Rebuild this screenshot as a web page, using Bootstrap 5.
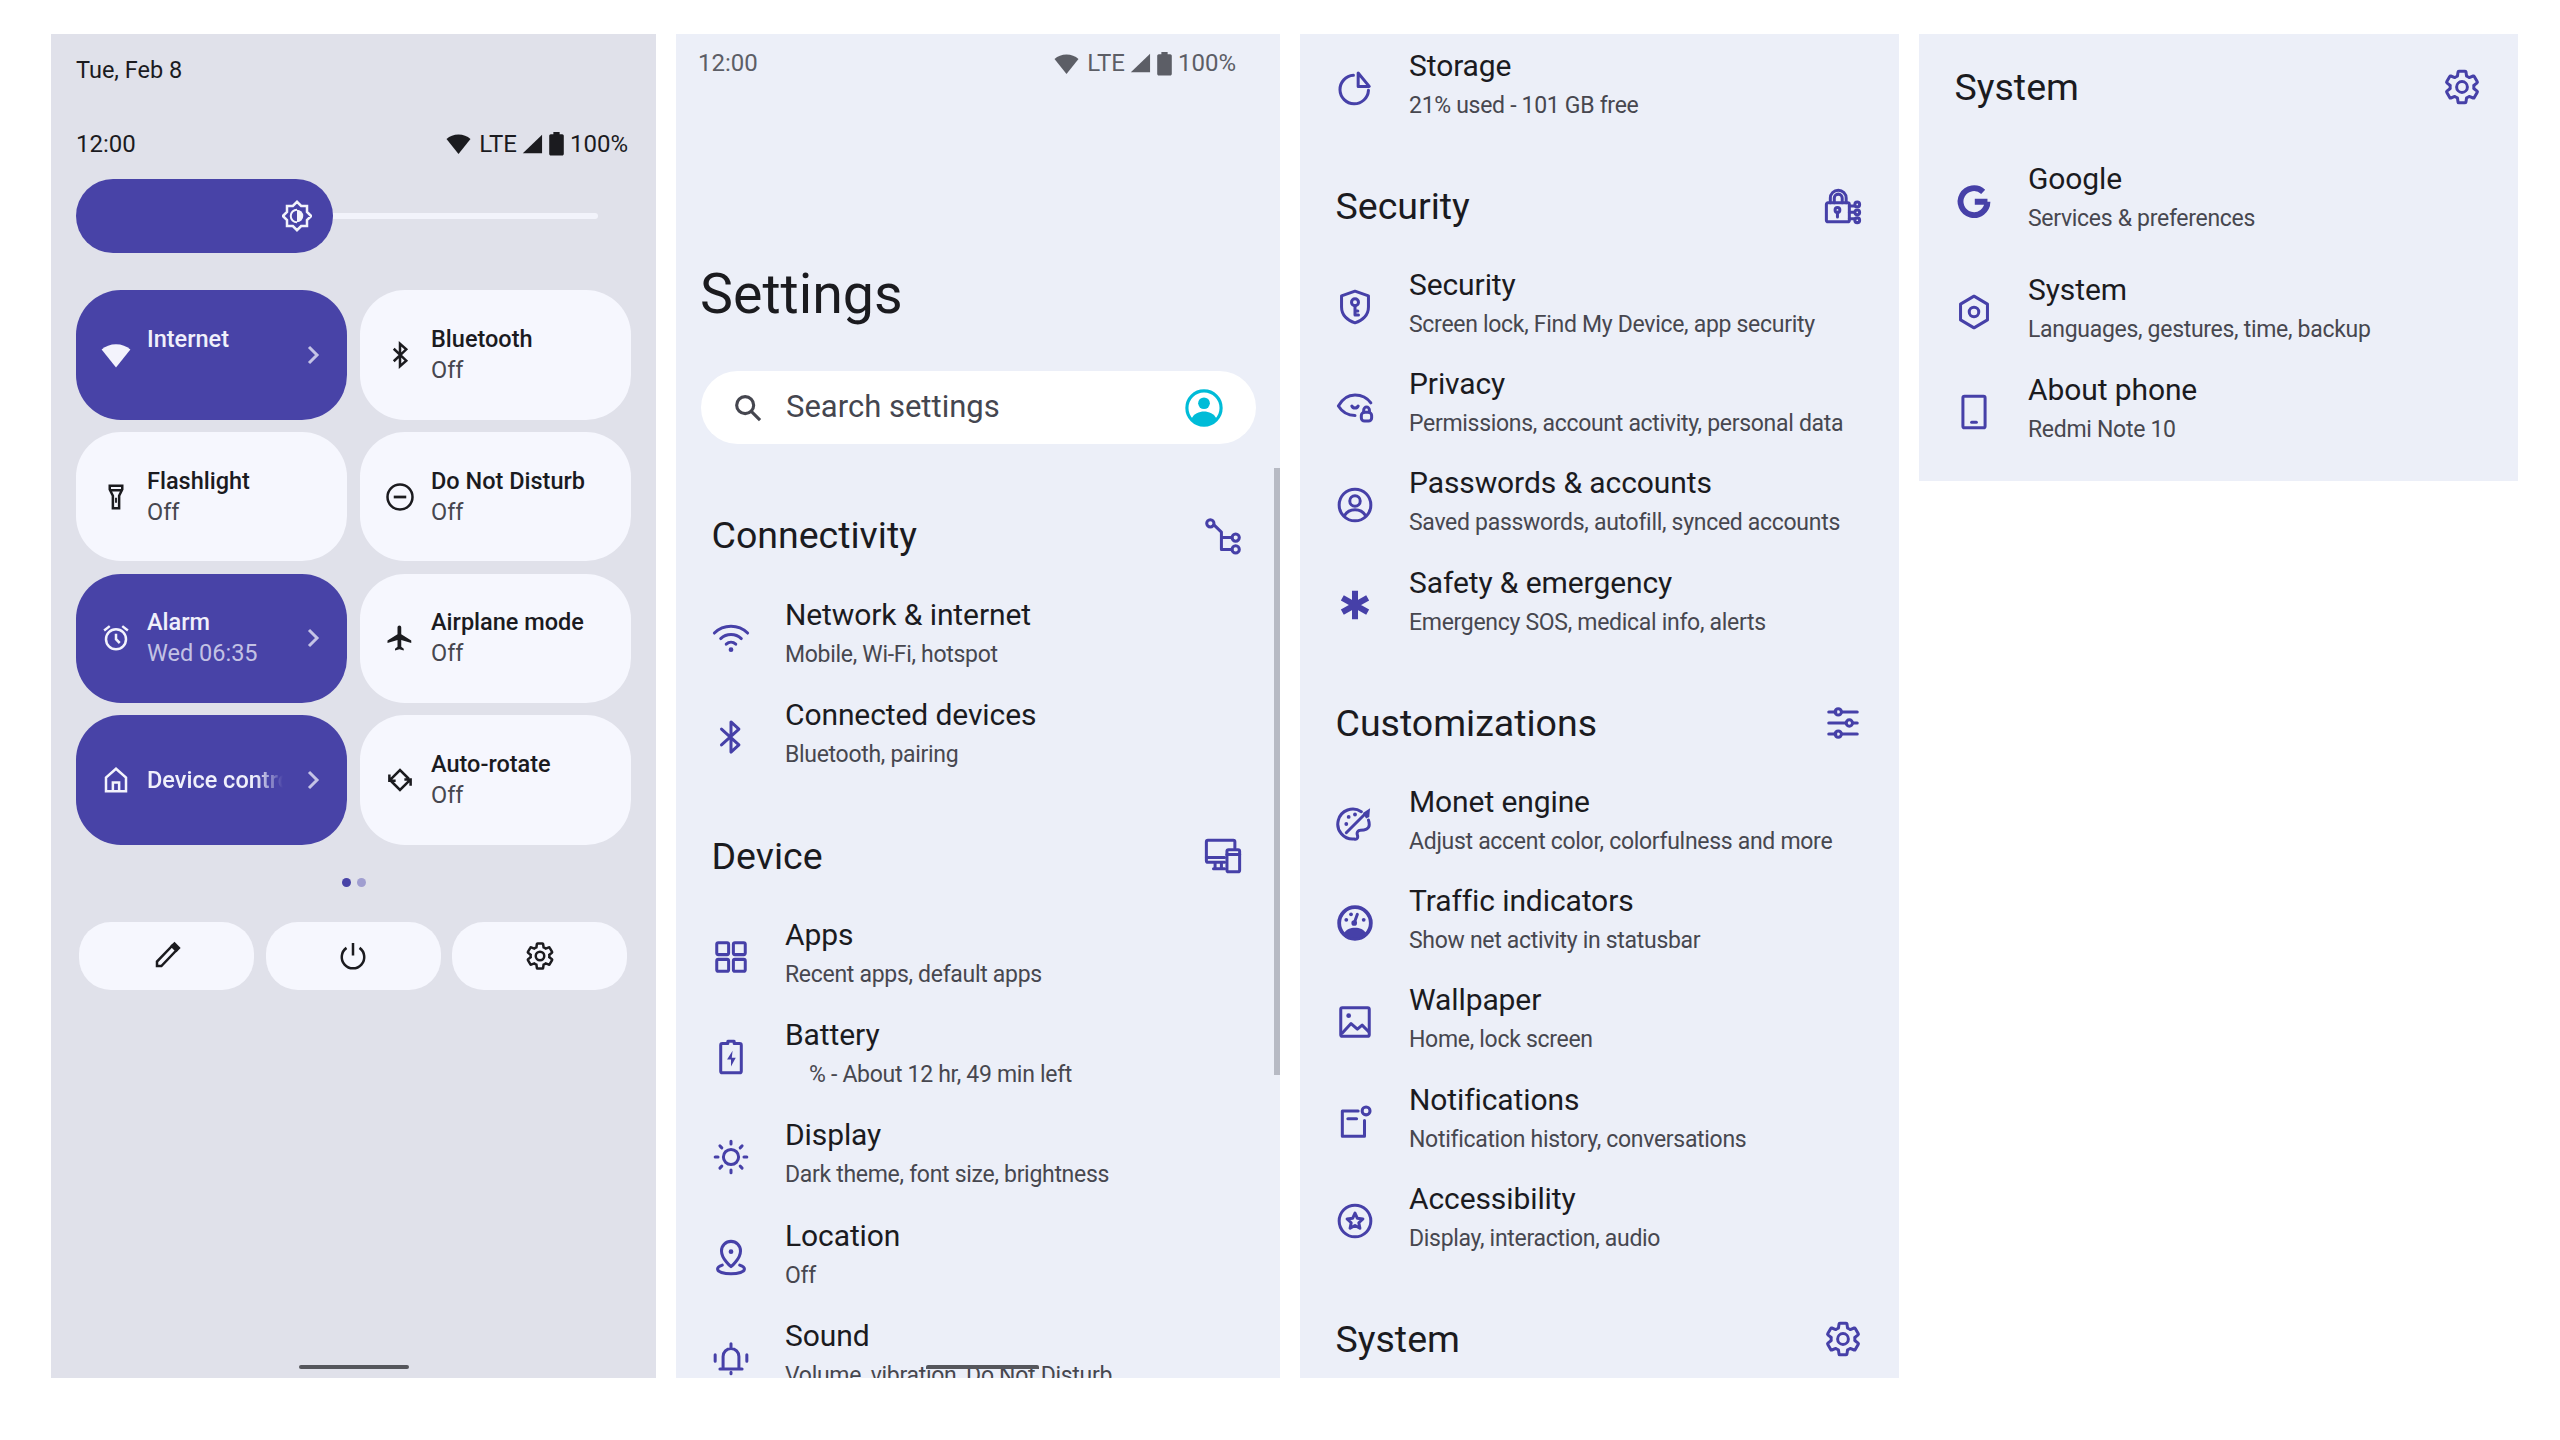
<!doctype html>
<html lang="en">
<head>
<meta charset="utf-8">
<title>Android settings</title>
<link href="https://cdn.jsdelivr.net/npm/bootstrap@5.3.0/dist/css/bootstrap.min.css" rel="stylesheet">
<style>
:root{--pri:#4843a7;--ink:#1b1b1f;--mut:#47474f;--line:#4640a8}
html,body{background:#fff;height:100%}
body{font-family:Roboto,"Liberation Sans",sans-serif;color:var(--ink);overflow:hidden}
.stage{padding:34px 0 0 51px;gap:20px;height:1378px}
.pane{height:1344px;overflow:hidden;flex:none;background:#eceff8}
.pane-qs{width:605px;background:#e0e1ea;padding:0 24px 0 25px}
.pane-a{width:604px;position:relative}
.pane-b{width:599px;padding:2px 37px 0 35.5px}
.pane-c{width:599px;height:447px;padding:24.5px 37px 0 35.5px}
.pane-a .body-a{padding:0 38px 0 35.5px}
.qdate{height:74px;font-size:23.5px}
.qstat{height:71px;font-size:24px}
.stat-ic{width:25px;height:25px;fill:currentColor;flex:none}
.stat-sig{width:22px;height:22px}
.stat-bat{margin:0 -3px 0 -3px}
.slider{height:74px;width:522px}
.thumb{width:257px;height:74px;border-radius:37px;background:var(--pri);padding-right:21px;color:#f2f3fb;flex:none}
.track{width:265px;height:6px;background:#f2f3fb;border-radius:0 3px 3px 0}
.tiles{grid-template-columns:271px 271px;column-gap:13px;row-gap:12.3px;margin-top:37px}
.tile{height:129.5px;border-radius:45px;background:#f6f7fe;padding-left:25px;padding-right:24px;color:var(--ink)}
.tile-on{background:var(--pri);color:#f3f3fc}
.tile-ic{width:30px;height:30px;margin-right:16px;flex:none;fill:none;stroke:currentColor;stroke-width:2}
.t1{font-size:23.5px;line-height:31px;font-weight:500}
.t2{font-size:23.5px;line-height:31px;color:var(--mut)}
.tile-on .t2{color:#c3c2e4}
.tile-on .t1{color:#f0f0fb}
.chev{width:20px;height:24px;fill:none;stroke:#c5c4e6;stroke-width:3;flex:none}
.fadeout{width:136px;flex:none;white-space:nowrap;overflow:hidden;-webkit-mask-image:linear-gradient(90deg,#000 80%,transparent);mask-image:linear-gradient(90deg,#000 80%,transparent)}
.dots{margin-top:33px;gap:6px;height:9px}
.dot{width:9px;height:9px;border-radius:50%;background:var(--pri)}
.dot-off{background:#a09ed0}
.acts{margin:35.5px 0 0 3px;gap:11.5px}
.act{width:175px;height:68px;border-radius:32px;background:#f6f7fe;color:var(--ink)}
.act svg{width:30px;height:30px;fill:none;stroke:currentColor;stroke-width:2}
.pill{width:110px;height:4px;background:#55565c;border-radius:2px;margin:auto auto 9px}
.astat{height:58px;padding:0 44px 0 22px;color:#5c5e66;font-size:24px}
.big{font-size:55.5px;line-height:70px;margin-top:168px;margin-left:24px;font-weight:400;color:var(--ink);height:70px}
.search{margin:41px 24px 0 24.5px;height:73px;border-radius:37px;background:#fff;padding:0 33px 0 30px;font-size:31px;color:#45464f}
.search svg.sm{width:34px;height:34px;margin-right:21.5px}
.sec{margin-top:43px}
.pane-b .sec{margin-top:42.3px}
.first{margin-top:63px}
.shead{height:60px;margin-bottom:17.5px;font-size:37.5px;line-height:57px;padding-bottom:3px}
.shead svg,.srow svg{fill:none;stroke:var(--line);stroke-width:1.9;stroke-linecap:round;stroke-linejoin:round;flex:none}
.shead svg{width:38px;height:38px}
.srow{height:99.6px}
.pane-a .srow{height:100.1px}
.pane-b .srow{height:99.3px}
.srow svg{width:38px;height:38px;margin-right:35.5px;margin-top:4px}
.ttl{font-size:30px;line-height:38px;white-space:nowrap;letter-spacing:-.1px}
.sub{font-size:23px;line-height:38px;padding-top:2px;color:var(--mut);white-space:nowrap;letter-spacing:-.3px}
.solid{fill:var(--line);stroke:none}
.mb-g{margin-bottom:11.5px}
.mt-g{margin-bottom:31px}
.scroll{position:absolute;right:0;top:434px;width:6px;height:607px;background:#b7bac4}
.gest{position:absolute;left:250px;top:1331px;width:113px;height:4px;background:#55565c;border-radius:2px 2px 0 0}
</style>
</head>
<body>
<svg class="d-none">
<symbol id="i-gear" viewBox="0 0 24 24"><path d="M19.43 12.98c.04-.32.07-.64.07-.98s-.03-.66-.07-.98l2.11-1.65c.19-.15.24-.42.12-.64l-2-3.46c-.12-.22-.39-.3-.61-.22l-2.49 1c-.52-.4-1.08-.73-1.69-.98l-.38-2.65C14.46 2.18 14.25 2 14 2h-4c-.25 0-.46.18-.49.42l-.38 2.65c-.61.25-1.17.59-1.69.98l-2.49-1c-.23-.09-.49 0-.61.22l-2 3.46c-.13.22-.07.49.12.64l2.11 1.65c-.04.32-.07.65-.07.98s.03.66.07.98l-2.11 1.65c-.19.15-.24.42-.12.64l2 3.46c.12.22.39.3.61.22l2.49-1c.52.4 1.08.73 1.69.98l.38 2.65c.03.24.24.42.49.42h4c.25 0 .46-.18.49-.42l.38-2.65c.61-.25 1.17-.59 1.69-.98l2.49 1c.23.09.49 0 .61-.22l2-3.46c.12-.22.07-.49-.12-.64l-2.11-1.65z"/><circle cx="12" cy="12" r="3.4"/></symbol>
<symbol id="i-wedge" viewBox="0 0 24 24"><path d="M12 22 .5 7.6C3.5 5 7.5 3.4 12 3.4S20.5 5 23.5 7.6z"/></symbol>
<symbol id="i-sig" viewBox="0 0 24 24"><path d="M23 2v20H2z"/></symbol>
<symbol id="i-bat" viewBox="0 0 24 24"><path d="M9 1h6v2h2.500c.8 0 1.500.7 1.500 1.500V22c0 .8-.7 1.500-1.500 1.500h-11C5.700 23.500 5 22.800 5 22V4.500C5 3.700 5.700 3 6.500 3H9z"/></symbol>
</svg>

<div class="stage d-flex">

<!-- quick settings -->
<section class="pane pane-qs d-flex flex-column">
  <div class="qdate d-flex align-items-center">Tue, Feb 8</div>
  <div class="qstat d-flex align-items-center justify-content-between pe-1">
    <span>12:00</span>
    <span class="d-flex align-items-center gap-1">
      <svg class="stat-ic"><use href="#i-wedge"/></svg><span class="ms-1">LTE</span>
      <svg class="stat-ic stat-sig"><use href="#i-sig"/></svg>
      <svg class="stat-ic stat-bat"><use href="#i-bat"/></svg><span>100%</span>
    </span>
  </div>
  <div class="slider d-flex align-items-center">
    <div class="thumb d-flex align-items-center justify-content-end">
      <svg width="30" height="36" viewBox="0 0 24 24" fill="none" stroke="currentColor" stroke-width="2"><path d="M20 8.690V4h-4.690L12 .690 8.690 4H4v4.690L.690 12 4 15.310V20h4.690L12 23.310 15.310 20H20v-4.690L23.310 12z"/><path d="M12 7a5 5 0 0 1 0 10z" fill="currentColor" stroke="none"/><path d="M12 7a5 5 0 0 0 0 10" stroke-width="1.6"/></svg>
    </div>
    <div class="track"></div>
  </div>
  <div class="tiles d-grid">
    <div class="tile tile-on d-flex align-items-center">
      <svg class="tile-ic" style="fill:currentColor;stroke:none"><use href="#i-wedge"/></svg>
      <div class="flex-grow-1"><div class="t1">Internet</div><div class="t2">&nbsp;</div></div>
      <svg class="chev" viewBox="0 0 20 24"><path d="M6 4l8 8-8 8"/></svg>
    </div>
    <div class="tile d-flex align-items-center">
      <svg class="tile-ic" viewBox="0 0 24 24"><path d="M7 7l10 9.500-5 4.500V3l5 4.500L7 17"/></svg>
      <div><div class="t1">Bluetooth</div><div class="t2">Off</div></div>
    </div>
    <div class="tile d-flex align-items-center">
      <svg class="tile-ic" viewBox="0 0 24 24"><path d="M7 3h10v3l-2.500 5v10h-5V11L7 6zM7.500 6.500h9"/><path d="M12 12.500v4" stroke-width="1.500"/></svg>
      <div><div class="t1">Flashlight</div><div class="t2">Off</div></div>
    </div>
    <div class="tile d-flex align-items-center">
      <svg class="tile-ic" viewBox="0 0 24 24"><circle cx="12" cy="12" r="10"/><path d="M7 12h10" stroke-width="2.200"/></svg>
      <div><div class="t1">Do Not Disturb</div><div class="t2">Off</div></div>
    </div>
    <div class="tile tile-on d-flex align-items-center">
      <svg class="tile-ic" viewBox="0 0 24 24"><circle cx="12" cy="13" r="8"/><path d="M12 8.500V13l3 3M2.500 6 7 2.500M21.500 6 17 2.500"/></svg>
      <div class="flex-grow-1"><div class="t1">Alarm</div><div class="t2">Wed 06:35</div></div>
      <svg class="chev" viewBox="0 0 20 24"><path d="M6 4l8 8-8 8"/></svg>
    </div>
    <div class="tile d-flex align-items-center">
      <svg class="tile-ic" viewBox="0 0 24 24" style="fill:currentColor;stroke:none"><path d="M21 16v-2l-8-5V3.500c0-.830-.670-1.500-1.500-1.500S10 2.670 10 3.500V9l-8 5v2l8-2.500V19l-2 1.500V22l3.500-1 3.500 1v-1.500L13 19v-5.500l8 2.500z"/></svg>
      <div><div class="t1">Airplane mode</div><div class="t2">Off</div></div>
    </div>
    <div class="tile tile-on d-flex align-items-center">
      <svg class="tile-ic" viewBox="0 0 24 24"><path d="M4 21V10l8-7 8 7v11zM9.500 21v-7h5v7"/></svg>
      <div class="fadeout t1">Device controls</div>
      <svg class="chev ms-auto" viewBox="0 0 20 24"><path d="M6 4l8 8-8 8"/></svg>
    </div>
    <div class="tile d-flex align-items-center">
      <svg class="tile-ic" viewBox="0 0 24 24"><path d="M3.500 7.500V12.500H8.500M3.500 12.500 12 4 19 11M20.500 16.500V11.500H15.500M20.500 11.500 12 20 5 13"/></svg>
      <div><div class="t1">Auto-rotate</div><div class="t2">Off</div></div>
    </div>
  </div>
  <div class="dots d-flex justify-content-center"><span class="dot"></span><span class="dot dot-off"></span></div>
  <div class="acts d-flex">
    <div class="act d-flex align-items-center justify-content-center"><svg viewBox="0 0 24 24"><path d="M4 20v-3.500L16 4l3.500 3.500L7.500 20z"/><path d="M16 4l2-2 3.500 3.500-2 2z" fill="currentColor"/></svg></div>
    <div class="act d-flex align-items-center justify-content-center"><svg viewBox="0 0 24 24"><path d="M12 1.500v10M6.800 5.500a9 9 0 1 0 10.400 0"/></svg></div>
    <div class="act d-flex align-items-center justify-content-center"><svg viewBox="0 0 24 24"><use href="#i-gear"/></svg></div>
  </div>
  <div class="pill"></div>
</section>

<!-- settings 1 -->
<section class="pane pane-a">
  <div class="astat d-flex align-items-center justify-content-between">
    <span>12:00</span>
    <span class="d-flex align-items-center gap-1">
      <svg class="stat-ic"><use href="#i-wedge"/></svg><span class="ms-1">LTE</span>
      <svg class="stat-ic stat-sig"><use href="#i-sig"/></svg>
      <svg class="stat-ic stat-bat"><use href="#i-bat"/></svg><span>100%</span>
    </span>
  </div>
  <h1 class="big">Settings</h1>
  <div class="search d-flex align-items-center">
    <svg class="sm" viewBox="0 0 24 24" fill="none" stroke="currentColor" stroke-width="2.200"><circle cx="10" cy="10" r="6"/><path d="M14.500 14.500 20.500 20.500"/></svg>
    <span class="flex-grow-1">Search settings</span>
    <svg width="38" height="38" viewBox="0 0 24 24"><circle cx="12" cy="12" r="10.800" fill="none" stroke="#00bcd8" stroke-width="2"/><circle cx="12" cy="9" r="3.700" fill="#00bcd8"/><path d="M4 19c1.500-3.500 5-4.800 8-4.800s6.500 1.300 8 4.800a10.800 10.800 0 0 1-16 0z" fill="#00bcd8"/></svg>
  </div>
  <div class="body-a">
    <div class="first">
      <div class="shead d-flex align-items-center justify-content-between"><span>Connectivity</span>
        <svg viewBox="0 0 24 24"><circle cx="4" cy="4" r="2.300"/><circle cx="20" cy="13" r="2.300"/><circle cx="20" cy="20.500" r="2.300"/><path d="M6.300 5 11 9.500V20.500h6.700M11 13h6.700"/></svg>
      </div>
      <div class="srow d-flex align-items-center">
        <svg viewBox="0 0 24 24"><path d="M1.500 9.500a15 15 0 0 1 21 0M5.500 13a9.500 9.500 0 0 1 13 0M9 16.500a4.500 4.500 0 0 1 6 0"/><circle class="solid" cx="12" cy="20" r="1.500"/></svg>
        <div><div class="ttl">Network &amp; internet</div><div class="sub">Mobile, Wi-Fi, hotspot</div></div>
      </div>
      <div class="srow d-flex align-items-center">
        <svg viewBox="0 0 24 24"><path d="M6 7l11 10-5 4.500V2.500L17 7 6 17"/></svg>
        <div><div class="ttl">Connected devices</div><div class="sub">Bluetooth, pairing</div></div>
      </div>
    </div>
    <div class="sec">
      <div class="shead d-flex align-items-center justify-content-between"><span>Device</span>
        <svg viewBox="0 0 24 24"><path d="M13 16H2.500c-.6 0-1-.4-1-1V3c0-.6.4-1 1-1h16c.6 0 1 .4 1 1v4"/><path d="M1.500 13H13M6 20h7M7 16.500V20M11 16.500V20"/><rect x="14.500" y="8" width="8" height="14" rx="1"/><path d="M14.500 11h8"/></svg>
      </div>
      <div class="srow d-flex align-items-center">
        <svg viewBox="0 0 24 24"><rect x="3" y="3" width="7.500" height="7.500" rx="1"/><rect x="13.500" y="3" width="7.500" height="7.500" rx="1"/><rect x="3" y="13.500" width="7.500" height="7.500" rx="1"/><rect x="13.500" y="13.500" width="7.500" height="7.500" rx="1"/></svg>
        <div><div class="ttl">Apps</div><div class="sub">Recent apps, default apps</div></div>
      </div>
      <div class="srow d-flex align-items-center">
        <svg viewBox="0 0 24 24"><path d="M10 2h4v1.500h3.500a1 1 0 0 1 1 1V21a1 1 0 0 1-1 1h-11a1 1 0 0 1-1-1V4.500a1 1 0 0 1 1-1H10z"/><path class="solid" d="M13 8l-3.500 5.500H12V18l3-5.500h-2.500z"/></svg>
        <div><div class="ttl">Battery</div><div class="sub ps-4">% - About 12 hr, 49 min left</div></div>
      </div>
      <div class="srow d-flex align-items-center">
        <svg viewBox="0 0 24 24"><circle cx="12" cy="12" r="4.800"/><path d="M12 2v1.800M12 20.200V22M2 12h1.800M20.200 12H22M5 5l1.200 1.200M17.800 17.800 19 19M5 19l1.200-1.200M17.800 6.200 19 5"/></svg>
        <div><div class="ttl">Display</div><div class="sub">Dark theme, font size, brightness</div></div>
      </div>
      <div class="srow d-flex align-items-center">
        <svg viewBox="0 0 24 24"><path d="M12 17.500s-6-5-6-10a6 6 0 0 1 12 0c0 5-6 10-6 10z"/><circle class="solid" cx="12" cy="8" r="1.500"/><path d="M6.500 16.500C4.500 17.200 3.500 18 3.500 19c0 1.700 3.800 3 8.500 3s8.500-1.300 8.500-3c0-1-1-1.800-3-2.500"/></svg>
        <div><div class="ttl">Location</div><div class="sub">Off</div></div>
      </div>
      <div class="srow d-flex align-items-center">
        <svg viewBox="0 0 24 24"><path d="M5 19h14M7 19v-8a5 5 0 0 1 10 0v8M12 3v3M12 21v1M2 10v4M22 10v4"/></svg>
        <div><div class="ttl">Sound</div><div class="sub">Volume, vibration, Do Not Disturb</div></div>
      </div>
    </div>
  </div>
  <div class="scroll"></div>
  <div class="gest"></div>
</section>

<!-- settings 2 -->
<section class="pane pane-b">
  <div class="srow d-flex align-items-center">
    <svg viewBox="0 0 24 24"><path d="M11 4a9 9 0 1 0 9.500 9.500"/><path d="M14 2.500 21 11h-7z"/></svg>
    <div><div class="ttl">Storage</div><div class="sub">21% used - 101 GB free</div></div>
  </div>
  <div class="sec">
    <div class="shead d-flex align-items-center justify-content-between"><span>Security</span>
      <svg viewBox="0 0 24 24"><path d="M4 10V7a5 5 0 0 1 10 0v3M6.500 10V7a2.500 2.500 0 0 1 5 0v3"/><path d="M15 22H2.500a1 1 0 0 1-1-1V11a1 1 0 0 1 1-1H15a1 1 0 0 1 1 1v10a1 1 0 0 1-1 1z"/><circle cx="8.500" cy="14.500" r="1.500"/><path d="M8.500 16v3M16 12l3 0M16 16h3M16 20h3"/><circle cx="21" cy="11" r="1.500"/><circle cx="21" cy="16" r="1.500"/><circle cx="21" cy="21" r="1.500"/></svg>
    </div>
    <div class="srow d-flex align-items-center">
      <svg viewBox="0 0 24 24"><path d="M12 2 3.500 5v7c0 5 3.600 8.700 8.500 10 4.900-1.300 8.500-5 8.500-10V5z"/><circle cx="12" cy="9" r="2.200"/><path d="M12 11.200V17h2.200M12 14.500h1.800"/></svg>
      <div><div class="ttl">Security</div><div class="sub">Screen lock, Find My Device, app security</div></div>
    </div>
    <div class="srow d-flex align-items-center">
      <svg viewBox="0 0 24 24"><path d="M22 10C19.500 6.500 15.500 5 12 5S4.500 6.500 1.500 12c2.500 4 6.500 6 10.500 6"/><path d="M10 12a2.200 2.200 0 0 0 4 0"/><rect x="16" y="16" width="6.500" height="5.500" rx="2"/><path d="M17.500 16v-1.500a1.800 1.800 0 0 1 3.600 0V16"/></svg>
      <div><div class="ttl">Privacy</div><div class="sub">Permissions, account activity, personal data</div></div>
    </div>
    <div class="srow d-flex align-items-center">
      <svg viewBox="0 0 24 24"><circle cx="12" cy="12" r="10"/><circle cx="12" cy="9.500" r="3.300"/><path d="M5.500 18.500c1.500-2.500 4-3.500 6.500-3.500s5 1 6.500 3.500"/></svg>
      <div><div class="ttl">Passwords &amp; accounts</div><div class="sub">Saved passwords, autofill, synced accounts</div></div>
    </div>
    <div class="srow d-flex align-items-center">
      <svg viewBox="0 0 24 24"><path d="M12 3v18M4 7.500l16 9M20 7.500l-16 9" style="stroke-width:3.800;stroke-linecap:butt"/></svg>
      <div><div class="ttl">Safety &amp; emergency</div><div class="sub">Emergency SOS, medical info, alerts</div></div>
    </div>
  </div>
  <div class="sec">
    <div class="shead d-flex align-items-center justify-content-between"><span>Customizations</span>
      <svg viewBox="0 0 24 24"><path d="M3 5h4.500M11 5h10M3 12h11M18 12h3M3 19h4.500M11 19h10"/><circle cx="9" cy="5" r="2"/><circle cx="16" cy="12" r="2"/><circle cx="9" cy="19" r="2"/></svg>
    </div>
    <div class="srow d-flex align-items-center">
      <svg viewBox="0 0 24 24"><path d="M16 4.200A9.500 9.500 0 1 0 11.500 21.500c2 .5 2.500-1 2-2.500s.2-3 2-3c2.500 0 5.500-1 5.500-3.500 0-1.500-.3-2.500-.5-3"/><path d="M6.500 17.500 18 6"/><path class="solid" d="M17 5l4.500-3-.5 5.500-2 1z"/><circle class="solid" cx="6.500" cy="12" r="1.200"/><circle class="solid" cx="8" cy="7.500" r="1.200"/><circle class="solid" cx="12" cy="6" r="1.200"/></svg>
      <div><div class="ttl">Monet engine</div><div class="sub">Adjust accent color, colorfulness and more</div></div>
    </div>
    <div class="srow d-flex align-items-center">
      <svg viewBox="0 0 24 24"><circle cx="12" cy="12" r="10" style="stroke-width:2.400"/><path class="solid" d="M5 18.500c1.500-2.500 4-3.500 7-3.500s5.500 1 7 3.500a10 10 0 0 1-14 0z"/><path d="M11.500 12 13.500 6.500"/><circle class="solid" cx="11.500" cy="12" r="1.800"/><circle class="solid" cx="6.500" cy="10" r="1.200"/><circle class="solid" cx="9.500" cy="6.500" r="1.200"/><circle class="solid" cx="17.500" cy="10" r="1.200"/></svg>
      <div><div class="ttl">Traffic indicators</div><div class="sub">Show net activity in statusbar</div></div>
    </div>
    <div class="srow d-flex align-items-center">
      <svg viewBox="0 0 24 24"><rect x="3" y="3" width="18" height="18" rx="1"/><circle class="solid" cx="8" cy="8" r="1.500"/><path d="M4 19l5.500-6 4 3.500 3-2.500 4 4"/></svg>
      <div><div class="ttl">Wallpaper</div><div class="sub">Home, lock screen</div></div>
    </div>
    <div class="srow d-flex align-items-center">
      <svg viewBox="0 0 24 24"><path d="M14 5H4v16h14V11"/><path d="M7.500 10H13"/><circle cx="19" cy="5" r="2.500"/></svg>
      <div><div class="ttl">Notifications</div><div class="sub">Notification history, conversations</div></div>
    </div>
    <div class="srow d-flex align-items-center">
      <svg viewBox="0 0 24 24"><circle cx="12" cy="12" r="10"/><path d="m12 7 1.500 3.300 3.500.4-2.600 2.400.7 3.500-3.100-1.800-3.100 1.800.7-3.500L7 10.700l3.500-.4z"/></svg>
      <div><div class="ttl">Accessibility</div><div class="sub">Display, interaction, audio</div></div>
    </div>
  </div>
  <div class="sec">
    <div class="shead d-flex align-items-center justify-content-between"><span>System</span>
      <svg viewBox="0 0 24 24"><use href="#i-gear"/></svg>
    </div>
  </div>
</section>

<!-- settings 3 -->
<section class="pane pane-c">
  <div class="shead d-flex align-items-center justify-content-between mt-g"><span>System</span>
    <svg viewBox="0 0 24 24"><use href="#i-gear"/></svg>
  </div>
  <div class="srow d-flex align-items-center mb-g">
    <svg viewBox="0 0 24 24"><path d="M20.500 12.500h-8M20.500 12.500a8.500 8.500 0 1 1-2.700-6.300" style="stroke-width:3.700;stroke-linecap:butt"/></svg>
    <div><div class="ttl">Google</div><div class="sub">Services &amp; preferences</div></div>
  </div>
  <div class="srow d-flex align-items-center">
    <svg viewBox="0 0 24 24"><path d="M12 2 3.500 7v10L12 22l8.500-5V7z"/><circle cx="12" cy="12" r="3"/></svg>
    <div><div class="ttl">System</div><div class="sub">Languages, gestures, time, backup</div></div>
  </div>
  <div class="srow d-flex align-items-center">
    <svg viewBox="0 0 24 24"><rect x="5" y="2" width="14" height="20" rx="1"/><path d="M10.500 18.500h3"/></svg>
    <div><div class="ttl">About phone</div><div class="sub">Redmi Note 10</div></div>
  </div>
</section>

</div>
</body>
</html>
